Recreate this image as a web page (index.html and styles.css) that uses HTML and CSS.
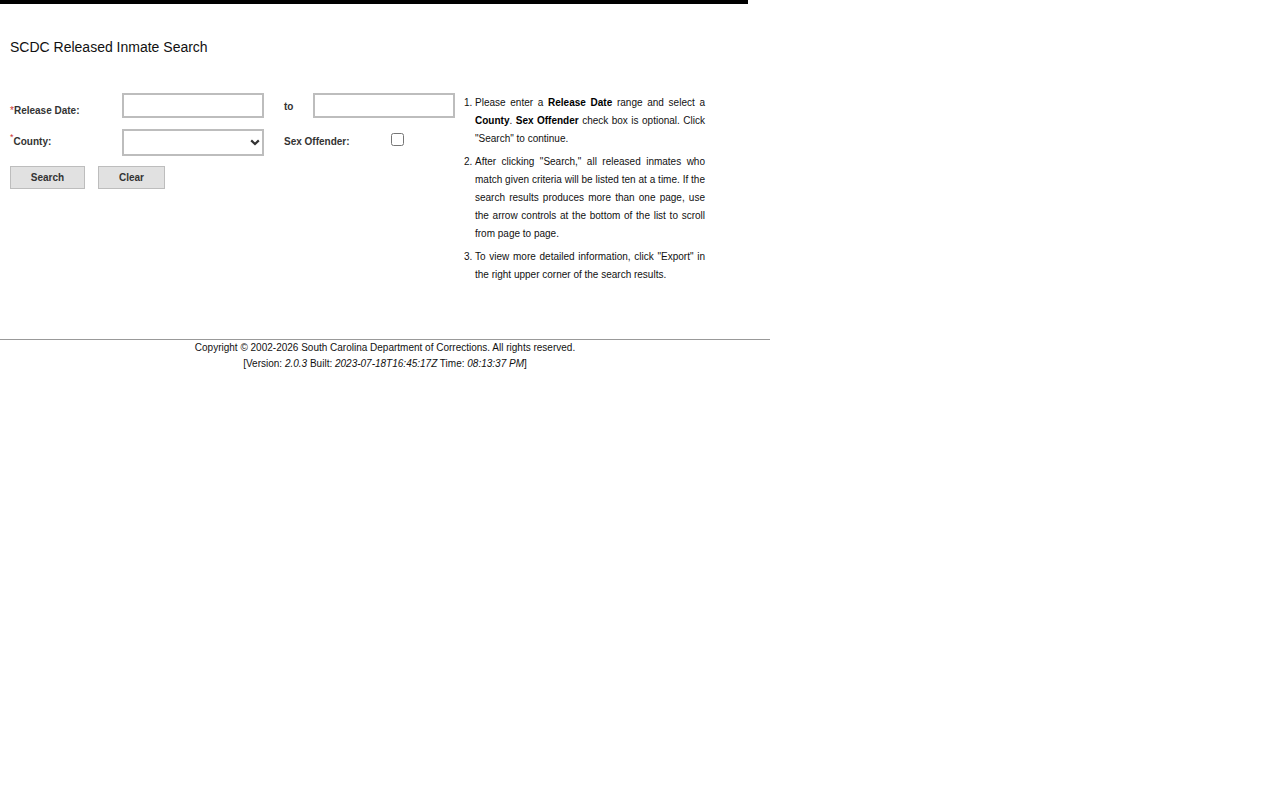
FILE: index.html
```html
<!DOCTYPE html>
<html>
<head>
<meta charset="utf-8">
<title>SCDC Released Inmate Search</title>
<link rel="stylesheet" href="styles.css">
</head>
<body>
<div class="page">
  <div class="topbar"></div>
  <h1 class="title">SCDC Released Inmate Search</h1>
  <div class="main">
    <form class="form">
      <div class="row row1">
        <label class="label label-date"><span class="req">*</span>Release Date:</label>
        <input type="text" class="field">
        <span class="mid mid-to">to</span>
        <input type="text" class="field">
      </div>
      <div class="row row2">
        <label class="label label-county"><sup class="req">*</sup>County:</label>
        <span class="select-wrap">
          <select class="field select"><option></option></select>
          <svg class="chev" width="10" height="7" viewBox="0 0 10 7"><path d="M1.2 1.4 L5 5 L8.8 1.4" fill="none" stroke="#333" stroke-width="2.2"/></svg>
        </span>
        <span class="mid mid-sex">Sex Offender:</span>
        <input type="checkbox" class="check">
      </div>
      <div class="row buttons">
        <button type="button" class="btn btn-search">Search</button>
        <button type="button" class="btn btn-clear">Clear</button>
      </div>
    </form>
    <ol class="help">
      <li>Please enter a <b>Release Date</b> range and select a <b>County</b>. <b>Sex Offender</b> check box is optional. Click "Search" to continue.</li>
      <li>After clicking "Search," all released inmates who match given criteria will be listed ten at a time. If the search results produces more than one page, use the arrow controls at the bottom of the list to scroll from page to page.</li>
      <li>To view more detailed information, click "Export" in the right upper corner of the search results.</li>
    </ol>
  </div>
  <footer class="footer">
    <div class="copy">Copyright © 2002-2026 South Carolina Department of Corrections. All rights reserved.</div>
    <div class="ver">[Version: <i>2.0.3</i> Built: <i>2023-07-18T16:45:17Z</i> Time: <i>08:13:37 PM</i>]</div>
  </footer>
</div>
</body>
</html>
```

FILE: styles.css
```css
html, body {
  margin: 0;
  padding: 0;
  background: #fff;
}
body {
  font-family: "Liberation Sans", Arial, sans-serif;
  color: #000;
}
.page {
  width: 770px;
}
.topbar {
  width: 748px;
  height: 4px;
  background: #000;
}
.title {
  margin: 0;
  padding: 34px 0 0 10px;
  font-size: 14px;
  font-weight: normal;
  line-height: 18px;
  color: #111;
}
.main {
  display: flex;
  align-items: flex-start;
  padding-top: 37px;
  height: 246px;
}
.form {
  width: 455px;
  padding-left: 10px;
  box-sizing: border-box;
  margin: 0;
}
.row {
  display: flex;
  align-items: flex-start;
}
.row1 {
  height: 36px;
}
.row2 {
  height: 37px;
}
.label {
  width: 112px;
  flex: none;
  font-size: 10px;
  font-weight: bold;
  color: #333;
  line-height: 14px;
}
.label-date {
  padding-top: 11px;
}
.label-county {
  padding-top: 6px;
}
.req {
  color: #c33;
  font-weight: normal;
}
sup.req {
  font-size: 9px;
  vertical-align: top;
  position: relative;
  top: -5px;
}
.field {
  width: 142px;
  height: 25px;
  box-sizing: border-box;
  border: 2px solid #bdbdbd;
  margin: 0;
  padding: 2px 4px;
  background: #fff;
  font-family: "Liberation Sans", Arial, sans-serif;
  font-size: 11px;
  flex: none;
}
.select-wrap {
  position: relative;
  display: block;
  flex: none;
  width: 142px;
  height: 27px;
}
.select {
  height: 27px;
  -webkit-appearance: none;
  appearance: none;
  border-radius: 0;
  display: block;
}
.chev {
  position: absolute;
  left: 128px;
  top: 10px;
  pointer-events: none;
}
.mid {
  font-size: 10px;
  font-weight: bold;
  color: #333;
  padding-left: 20px;
  line-height: 14px;
  flex: none;
}
.mid-to {
  width: 29px;
  padding-top: 7px;
}
.mid-sex {
  width: 107px;
  padding-top: 6px;
}
.check {
  margin: 4px 0 0 0;
  width: 13px;
  height: 13px;
}
.btn {
  height: 23px;
  margin: 0;
  padding: 0;
  background: #e1e1e1;
  border: 1px solid #bdbdbd;
  font-family: "Liberation Sans", Arial, sans-serif;
  font-size: 10px;
  font-weight: bold;
  color: #333;
}
.btn-search {
  width: 75px;
}
.btn-clear {
  width: 67px;
  margin-left: 13px;
}
.help {
  margin: 0;
  padding: 1px 0 0 20px;
  width: 230px;
  font-size: 10px;
  line-height: 18px;
  color: #111;
  text-align: justify;
}
.help li {
  margin-bottom: 5px;
}
.help b {
  color: #000;
}
.footer {
  border-top: 1px solid #999;
  text-align: center;
  font-size: 10px;
  line-height: 16px;
  color: #111;
}
```
